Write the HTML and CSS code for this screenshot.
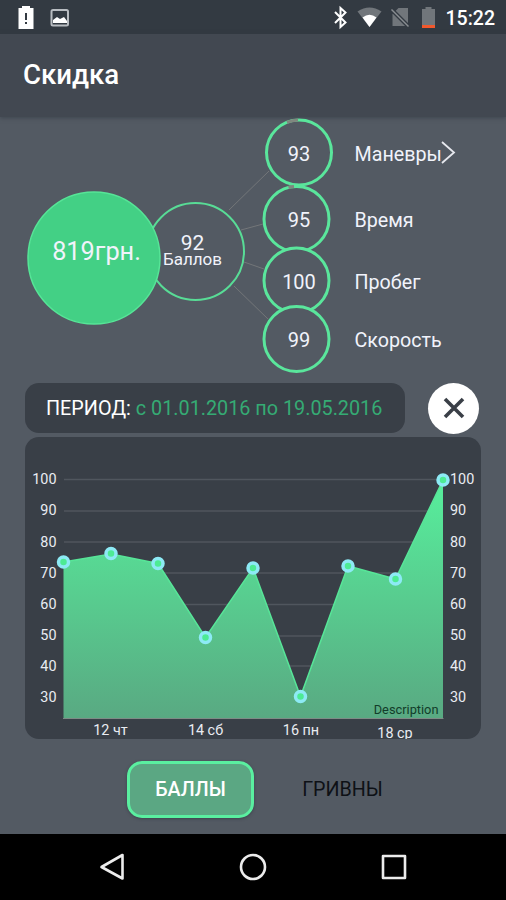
FILE: index.html
```
<!DOCTYPE html>
<html lang="ru">
<head>
    <meta charset="UTF-8">
    <meta name="viewport" content="width=device-width, initial-scale=1.0">
    <title>Скидка</title>
    <link rel="stylesheet" href="styles.css">
</head>
<body>
    <div class="status-bar">
        <svg class="status-icons" width="60" height="34" viewBox="0 0 60 34">
            <path d="M7.500 8h3.500V6h8v2h3.500v21h-15V8z" fill="#fff"/>
            <path d="M14 13h2v7h-2zM14 22h2v2h-2z" fill="#333a42"/>
            <rect x="40.500" y="10" width="16.500" height="15.500" rx="1.500" fill="none" stroke="#b9bdc2" stroke-width="2"/>
            <path d="M42 23v-3l4-3 3 2 4-2 3 4v2z" fill="#fff"/>
        </svg>
        <div class="status-right">
            <svg width="110" height="34" viewBox="330 0 110 34">
                <path d="M335 12l10.500 10.500-5 4.500V8l5 4.500L335 23" fill="none" stroke="#fff" stroke-width="2"/>
                <path d="M357.500 11.500Q369.500 3.500 381.500 11.500L369.500 27z" fill="#71767b"/>
                <path d="M362.500 17.500Q369.500 12 376.500 17.500L369.500 27z" fill="#fff"/>
                <path d="M398.500 8H408v18h-15.500V14z" fill="#71767b"/>
                <path d="M391 9l17.500 17.500" stroke="#333a42" stroke-width="4"/>
                <path d="M391.500 9.500L408.500 26.500" stroke="#8a8e92" stroke-width="1.500"/>
                <path d="M422 9h3.500V7h6v2h3.500v19h-13z" fill="#71767b"/>
                <path d="M422 25h13v3h-13z" fill="#f2582c"/>
            </svg>
            <span class="clock">15:22</span>
        </div>
    </div>

    <header class="header">
        <h1>Скидка</h1>
    </header>

    <main class="content">
        <!-- Score bubbles -->
        <svg class="bubbles" width="506" height="266" viewBox="0 117 506 266">
            <g class="link">
                <path d="M229 210L269 171"/>
                <path d="M241 230L263 224"/>
                <path d="M244 262L264 269"/>
                <path d="M234 286L268 319"/>
            </g>
            <circle class="ring-mid" cx="195.500" cy="251.500" r="48.500"/>
            <circle class="total" cx="94" cy="258" r="66"/>
            <!-- each ring covers the bottom of the one above -->
            <g class="ring">
                <circle cx="299" cy="152.500" r="32.500"/>
                <circle cx="296.500" cy="219" r="32.500"/>
                <circle cx="296.500" cy="280.500" r="32.500"/>
                <circle cx="296.500" cy="339" r="32.500"/>
            </g>
            <path class="ring-gap" d="M287 122.300A32.500 32.500 0 0 1 298 120"/>
            <path class="ring-gap" d="M288.500 187.500A32.500 32.500 0 0 1 294 186.600"/>
            <text class="total-text" x="96.500" y="260">819грн.</text>
            <text class="score" x="192.500" y="250">92</text>
            <text class="score-label" x="192.500" y="264.500">Баллов</text>
            <g class="value">
                <text x="299" y="160.500">93</text>
                <text x="299" y="227">95</text>
                <text x="299" y="289">100</text>
                <text x="299" y="347">99</text>
            </g>
            <g class="label">
                <text x="354.500" y="160.500">Маневры</text>
                <text x="354.500" y="227">Время</text>
                <text x="354.500" y="289">Пробег</text>
                <text x="354.500" y="347">Скорость</text>
            </g>
            <path class="chevron" d="M442 142L454 152.500L442 163"/>
        </svg>

        <div class="period-row">
            <div class="period">ПЕРИОД: <span class="dates">с 01.01.2016 по 19.05.2016</span></div>
            <button class="close" aria-label="Закрыть">
                <svg width="24" height="24" viewBox="0 0 24 24">
                    <path d="M3 3l18 18M21 3L3 21" stroke="#3a3f47" stroke-width="3.600"/>
                </svg>
            </button>
        </div>

        <!-- Chart -->
        <div class="chart">
            <svg width="456" height="302" viewBox="25 437 456 302">
                <defs>
                    <linearGradient id="fill" gradientUnits="userSpaceOnUse" x1="0" y1="480" x2="0" y2="719">
                        <stop offset="0" stop-color="#57ef9c"/>
                        <stop offset="1" stop-color="#59a982"/>
                    </linearGradient>
                </defs>
                <path class="grid" d="M64 479.500H443M64 511H443M64 542H443M64 573H443M64 604.500H443M64 636H443M64 666H443M64 697.500H443"/>
                <path fill="url(#fill)" d="M63.500 562L111 554L158 563.500L205.500 637.500L253 568L300.500 696.500L348 566L395.500 579L443 480V718.500H63.500z"/>
                <path class="line" d="M63.500 562L111 554L158 563.500L205.500 637.500L253 568L300.500 696.500L348 566L395.500 579L443 480"/>
                <path class="base" d="M63 718.500H443.500"/>
                <g class="dot">
                    <circle cx="63.500" cy="562" r="5"/>
                    <circle cx="111" cy="553.500" r="5"/>
                    <circle cx="158" cy="563.500" r="5"/>
                    <circle cx="205.500" cy="637.500" r="5"/>
                    <circle cx="253" cy="568" r="5"/>
                    <circle cx="300.500" cy="696.500" r="5"/>
                    <circle cx="348" cy="566" r="5"/>
                    <circle cx="395.500" cy="579" r="5"/>
                    <circle cx="443" cy="480" r="5"/>
                </g>
                <g class="axis axis-left">
                    <text x="56.500" y="484">100</text>
                    <text x="56.500" y="515">90</text>
                    <text x="56.500" y="546.500">80</text>
                    <text x="56.500" y="577.500">70</text>
                    <text x="56.500" y="609">60</text>
                    <text x="56.500" y="640">50</text>
                    <text x="56.500" y="671">40</text>
                    <text x="56.500" y="702">30</text>
                </g>
                <g class="axis">
                    <text x="450" y="484">100</text>
                    <text x="450" y="515">90</text>
                    <text x="450" y="546.500">80</text>
                    <text x="450" y="577.500">70</text>
                    <text x="450" y="609">60</text>
                    <text x="450" y="640">50</text>
                    <text x="450" y="671">40</text>
                    <text x="450" y="702">30</text>
                </g>
                <g class="axis axis-days">
                    <text x="110.500" y="735">12 чт</text>
                    <text x="205.500" y="735">14 сб</text>
                    <text x="301" y="735">16 пн</text>
                    <text x="395" y="737.500">18 ср</text>
                </g>
                <text class="description" x="438.500" y="714">Description</text>
            </svg>
        </div>

        <div class="tabs">
            <button class="tab active">БАЛЛЫ</button>
            <button class="tab">ГРИВНЫ</button>
        </div>
    </main>

    <nav class="nav-bar">
        <svg width="30" height="30" viewBox="0 0 30 30"><path d="M25.500 3v23.500L4.500 15z"/></svg>
        <svg width="30" height="30" viewBox="0 0 30 30"><circle cx="15" cy="15" r="12"/></svg>
        <svg width="30" height="30" viewBox="0 0 30 30"><rect x="4" y="4" width="22" height="22"/></svg>
    </nav>
</body>
</html>
```
FILE: styles.css
```
* {
    box-sizing: border-box;
    margin: 0;
    padding: 0;
    font-family: Roboto, 'Noto Sans', sans-serif;
}

body {
    display: flex;
    flex-direction: column;
    width: 506px;
    height: 900px;
    background: #535a63;
    color: #fff;
    overflow: hidden;
}

svg {
    display: block;
}

.status-bar {
    display: flex;
    justify-content: space-between;
    height: 34px;
    padding: 0 11px 0 11px;
    background: #333a42;
}

.status-right {
    display: flex;
    align-items: center;
    gap: 6px;
}

.clock {
    padding-top: 2px;
    font-size: 19.5px;
    font-weight: 500;
}

.header {
    display: flex;
    align-items: center;
    height: 83px;
    padding: 0 0 2px 23px;
    background: #424851;
    box-shadow: 0 1px 4px rgba(50, 56, 66, 0.6);
}

.header h1 {
    font-size: 27.6px;
    font-weight: 500;
}

.content {
    display: flex;
    flex-direction: column;
    flex: 1;
}

/* Bubbles */
.bubbles text {
    text-anchor: middle;
    fill: #f1f3fb;
}

.link {
    stroke: #737679;
    stroke-width: 1;
}

.ring-mid {
    fill: none;
    stroke: #58dc96;
    stroke-width: 2;
}

.total {
    fill: #43d085;
    stroke: #56e597;
    stroke-width: 1.5;
}

.ring {
    fill: #535a63;
    stroke: #5ae69c;
    stroke-width: 3;
}

.ring-gap {
    fill: none;
    stroke: #80877f;
    stroke-width: 3;
}

.total-text {
    font-size: 25.3px;
}

.score {
    font-size: 21px;
}

.score-label {
    font-size: 17px;
}

.value {
    font-size: 20px;
}

.bubbles .label text {
    font-size: 19.7px;
    text-anchor: start;
}

.chevron {
    fill: none;
    stroke: #e6e8ee;
    stroke-width: 1.8;
}

/* Period */
.period-row {
    display: flex;
    align-items: center;
    gap: 23px;
    height: 50px;
    padding-left: 25px;
}

.period {
    width: 380px;
    height: 50px;
    padding-left: 21px;
    line-height: 52px;
    font-size: 19.8px;
    white-space: nowrap;
    background: #393f47;
    border-radius: 14px;
}

.dates {
    color: #35ab74;
}

.close {
    display: flex;
    align-items: center;
    justify-content: center;
    width: 51px;
    height: 51px;
    border: none;
    border-radius: 50%;
    background: #fff;
}

/* Chart */
.chart {
    width: 456px;
    height: 302px;
    margin: 4px 0 0 25px;
    background: #393f47;
    border-radius: 14px;
    overflow: hidden;
}

.grid {
    stroke: #50565e;
    stroke-width: 1.5;
}

.line {
    fill: none;
    stroke: #57e598;
    stroke-width: 1.5;
}

.base {
    stroke: #7d8c86;
    stroke-width: 1;
}

.dot {
    fill: #4deb94;
    stroke: #8deaf5;
    stroke-width: 3.5;
}

.axis {
    font-size: 14.4px;
    fill: #e9ecf2;
}

.axis-left {
    text-anchor: end;
}

.axis-days {
    text-anchor: middle;
}

.description {
    font-size: 12.8px;
    text-anchor: end;
    fill: #123d2a;
}

/* Tabs */
.tabs {
    display: flex;
    gap: 25px;
    padding: 22px 0 0 127px;
}

.tab {
    width: 127px;
    height: 57px;
    border: none;
    background: none;
    font-size: 19.7px;
    color: #0e1116;
}

.tab.active {
    border: 3px solid #5aefa0;
    border-radius: 15px;
    background: #5ba783;
    color: #fff;
    font-weight: 500;
    box-shadow: 0 1px 3px rgba(40, 45, 60, 0.5);
}

.nav-bar {
    display: flex;
    align-items: center;
    justify-content: center;
    gap: 111px;
    height: 66px;
    background: #000;
}

.nav-bar svg {
    fill: none;
    stroke: #ececec;
    stroke-width: 2.6;
    stroke-linejoin: round;
}
```
